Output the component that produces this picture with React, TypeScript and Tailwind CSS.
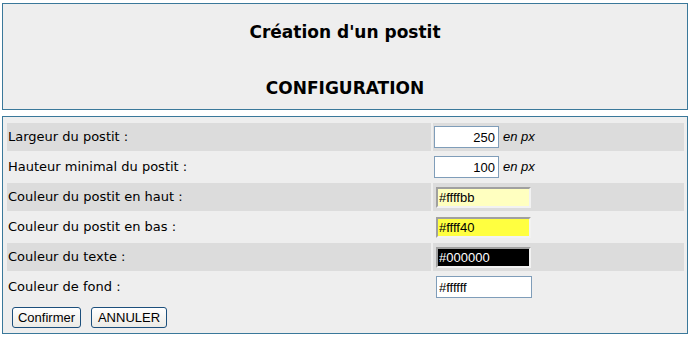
const rows = [
  { label: "Largeur du postit :", kind: "num", value: "250" },
  { label: "Hauteur minimal du postit :", kind: "num", value: "100" },
  { label: "Couleur du postit en haut :", kind: "color", value: "#ffffbb", bg: "bg-[#ffffc0]", fg: "text-black" },
  { label: "Couleur du postit en bas :", kind: "color", value: "#ffff40", bg: "bg-[#ffff40]", fg: "text-black" },
  { label: "Couleur du texte :", kind: "color", value: "#000000", bg: "bg-black", fg: "text-white" },
  { label: "Couleur de fond :", kind: "plain", value: "#ffffff" },
];

export default function App() {
  return (
    <div className="bg-white w-[692px] h-[337px] pt-[3px] pl-[2px] font-['DejaVu_Sans',sans-serif] text-black">
      <div className="w-[686px] h-[107px] border border-[#3a789a] bg-[#eeeeee] flex flex-col items-center pt-[18px] text-[17px] font-bold">
        <div className="leading-[20px]">Création d'un postit</div>
        <div className="leading-[20px] mt-[36px]">CONFIGURATION</div>
      </div>

      <div className="mt-[6px] w-[686px] h-[218px] border border-[#3a789a] bg-[#eeeeee] pl-[4px] pt-[6px]">
        <div className="flex flex-col gap-[2px] w-[677px]">
          {rows.map((r, i) => {
            const shade = i % 2 === 0 ? "bg-[#dcdcdc]" : "";
            return (
              <div key={r.label} className="flex gap-[2px] h-[28px]">
                <div className={`w-[424px] ${shade} flex items-center pl-[1px] text-[13px]`}>{r.label}</div>
                <div className={`flex-1 ${shade} flex items-center font-['Liberation_Sans',sans-serif] text-[13px]`}>
                  {r.kind === "num" && (
                    <>
                      <input
                        readOnly
                        value={r.value}
                        className="ml-[1px] w-[65px] h-[22px] border border-[#7f9db9] bg-white text-right pr-[3px] outline-none"
                      />
                      <span className="ml-[4px] italic">en px</span>
                    </>
                  )}
                  {r.kind === "color" && (
                    <input
                      readOnly
                      value={r.value}
                      className={`ml-[3px] w-[95px] h-[21px] border-2 border-t-[#a0a0a0] border-l-[#a0a0a0] border-b-[#f2f2f2] border-r-[#f2f2f2] pl-[1px] outline-none ${r.bg} ${r.fg}`}
                    />
                  )}
                  {r.kind === "plain" && (
                    <input
                      readOnly
                      value={r.value}
                      className="ml-[3px] w-[96px] h-[22px] border border-[#7f9db9] bg-white pl-[2px] outline-none"
                    />
                  )}
                </div>
              </div>
            );
          })}
        </div>
        <div className="flex gap-[10px] pl-[5px] mt-[6px] font-['Liberation_Sans',sans-serif] text-[13px]">
          <button className="w-[69px] h-[21px] border border-[#1c4f7c] rounded-[3px] bg-gradient-to-b from-white to-[#ecebe6] leading-none">
            Confirmer
          </button>
          <button className="w-[76px] h-[21px] border border-[#1c4f7c] rounded-[3px] bg-gradient-to-b from-white to-[#ecebe6] leading-none">
            ANNULER
          </button>
        </div>
      </div>
    </div>
  );
}
